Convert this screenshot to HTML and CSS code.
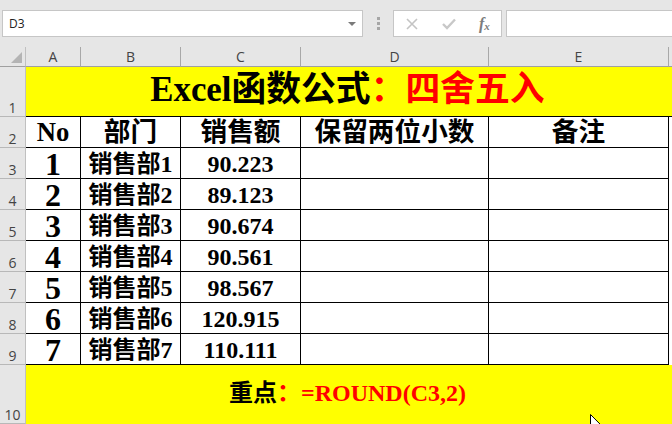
FILE: index.html
```html
<!DOCTYPE html>
<html lang="zh">
<head>
<meta charset="utf-8">
<title>Excel</title>
<link rel="stylesheet" href="styles.css">
</head>
<body>
<div class="toolbar">
  <div class="box namebox"><span>D3</span><i class="caret"></i></div>
  <div class="grip"><i></i><i></i><i></i></div>
  <div class="box fxbox">
    <svg class="ico" width="12" height="12" viewBox="0 0 12 12"><path d="M1 1 L11 11 M11 1 L1 11" stroke="#c4c4c4" stroke-width="1.6" fill="none"/></svg>
    <svg class="ico" width="14" height="12" viewBox="0 0 14 12"><path d="M1 6 L5 10 L13 1.5" stroke="#c8c8c8" stroke-width="2.4" fill="none"/></svg>
    <span class="fx">f<sub>x</sub></span>
  </div>
  <div class="box formula"></div>
</div>
<div class="sheet">
  <div class="corner"><i></i></div>
  <div class="ch">A</div><div class="ch">B</div><div class="ch">C</div><div class="ch">D</div><div class="ch">E</div><div class="ch end"></div>

  <div class="rh">1</div>
  <div class="merged title">Excel函数公式<em>：四舍五入</em></div>

  <div class="rh">2</div>
  <div class="c h no">No</div><div class="c h">部门</div><div class="c h">销售额</div><div class="c h">保留两位小数</div><div class="c h">备注</div><div class="gap"></div>

  <div class="rh">3</div>
  <div class="c n">1</div><div class="c d">销售部1</div><div class="c v">90.223</div><div class="c"></div><div class="c"></div><div class="gap"></div>
  <div class="rh">4</div>
  <div class="c n">2</div><div class="c d">销售部2</div><div class="c v">89.123</div><div class="c"></div><div class="c"></div><div class="gap"></div>
  <div class="rh">5</div>
  <div class="c n">3</div><div class="c d">销售部3</div><div class="c v">90.674</div><div class="c"></div><div class="c"></div><div class="gap"></div>
  <div class="rh">6</div>
  <div class="c n">4</div><div class="c d">销售部4</div><div class="c v">90.561</div><div class="c"></div><div class="c"></div><div class="gap"></div>
  <div class="rh">7</div>
  <div class="c n">5</div><div class="c d">销售部5</div><div class="c v">98.567</div><div class="c"></div><div class="c"></div><div class="gap"></div>
  <div class="rh">8</div>
  <div class="c n">6</div><div class="c d">销售部6</div><div class="c v">120.915</div><div class="c"></div><div class="c"></div><div class="gap"></div>
  <div class="rh">9</div>
  <div class="c n">7</div><div class="c d">销售部7</div><div class="c v">110.111</div><div class="c"></div><div class="c"></div><div class="gap"></div>

  <div class="rh">10</div>
  <div class="merged note">重点<em>：=ROUND(C3,2)</em></div>
</div>
<svg class="cursor" width="12" height="18" viewBox="0 0 12 18"><path d="M0.5 0.5 L0.5 14 L3.6 11 L10.5 10.6 Z" fill="#fff" stroke="#000" stroke-width="1"/></svg>
</body>
</html>
```
FILE: styles.css
```css
* { box-sizing: border-box; }
html, body { margin: 0; height: 424px; overflow: hidden; background: #fff; }
body { position: relative; font-family: "Liberation Serif", "Noto Sans CJK SC", serif; color: #000; }

.toolbar { display: flex; height: 47px; padding-top: 10px; align-items: flex-start; background: #e6e6e6; }
.box { height: 27px; background: #fff; border: 1px solid #c6c6c6; display: flex; align-items: center; }
.namebox { margin-left: 2px; width: 361px; padding: 0 6px 0 6px; justify-content: space-between; font: 12px "Open Sans", sans-serif; color: #222; }
.caret { border: 4px solid transparent; border-top: 4px solid #7a7a7a; border-bottom: 0; width: 0; height: 0; }
.grip { width: 30px; height: 27px; display: flex; flex-direction: column; align-items: center; justify-content: center; gap: 2px; }
.grip i { width: 3px; height: 3px; background: #a6a6a6; }
.fxbox { width: 109px; padding-left: 12px; gap: 24px; }
.ico { display: block; }
.fx { font: italic 700 16px "Liberation Serif", serif; color: #7c7c7c; line-height: 1; margin-left: -1px; }
.fx sub { font-size: 11px; vertical-align: -1px; line-height: 0; }
.formula { margin-left: 4px; flex: 1; border-right: 0; }

.sheet {
  display: grid;
  grid-template-columns: 26px 55px 100px 120px 188px 180px 3px;
  grid-template-rows: 20px 50px repeat(8, 31px) 59px;
  background: #fff;
}
.corner { background: #e6e6e6; border-right: 1px solid #c0c0c0; border-bottom: 1px solid #a0a0a0; position: relative; }
.corner i { position: absolute; right: 3px; bottom: 3px; width: 0; height: 0; border-style: solid; border-width: 0 0 11px 11px; border-color: transparent transparent #b4b4b4 transparent; }
.ch { background: #e6e6e6; border-right: 1px solid #a8a8a8; border-bottom: 1px solid #a0a0a0; display: flex; align-items: flex-end; justify-content: center; font: 14px/18px "Open Sans", sans-serif; color: #444; }
.ch.end { border-right: 0; }
.rh { grid-column: 1; background: #e6e6e6; border-right: 1px solid #c0c0c0; border-bottom: 1px solid #b8b8b8; display: flex; align-items: flex-end; justify-content: center; font: 14px/16px "Open Sans", sans-serif; color: #444; }

.merged { grid-column: 2 / 8; background: #ff0; display: flex; align-items: center; justify-content: center; font-weight: 700; padding-right: 3px; }
.merged em { font-style: normal; color: #f00; }
.title { font-size: 34.8px; line-height: 40px; padding-bottom: 3px; border-bottom: 1px solid #000; }
.note { font-size: 24px; line-height: 28px; padding-bottom: 3px; }

.c { border-right: 1px solid #000; border-bottom: 1px solid #000; display: flex; align-items: center; justify-content: center; font-weight: 700; white-space: nowrap; }
.h { font-size: 26.67px; line-height: 30px; }
.n { font-size: 32px; line-height: 28px; padding-top: 1px; }
.d, .v { font-size: 24px; line-height: 28px; padding-top: 2px; }

.cursor { position: absolute; left: 590px; top: 414px; }
```
